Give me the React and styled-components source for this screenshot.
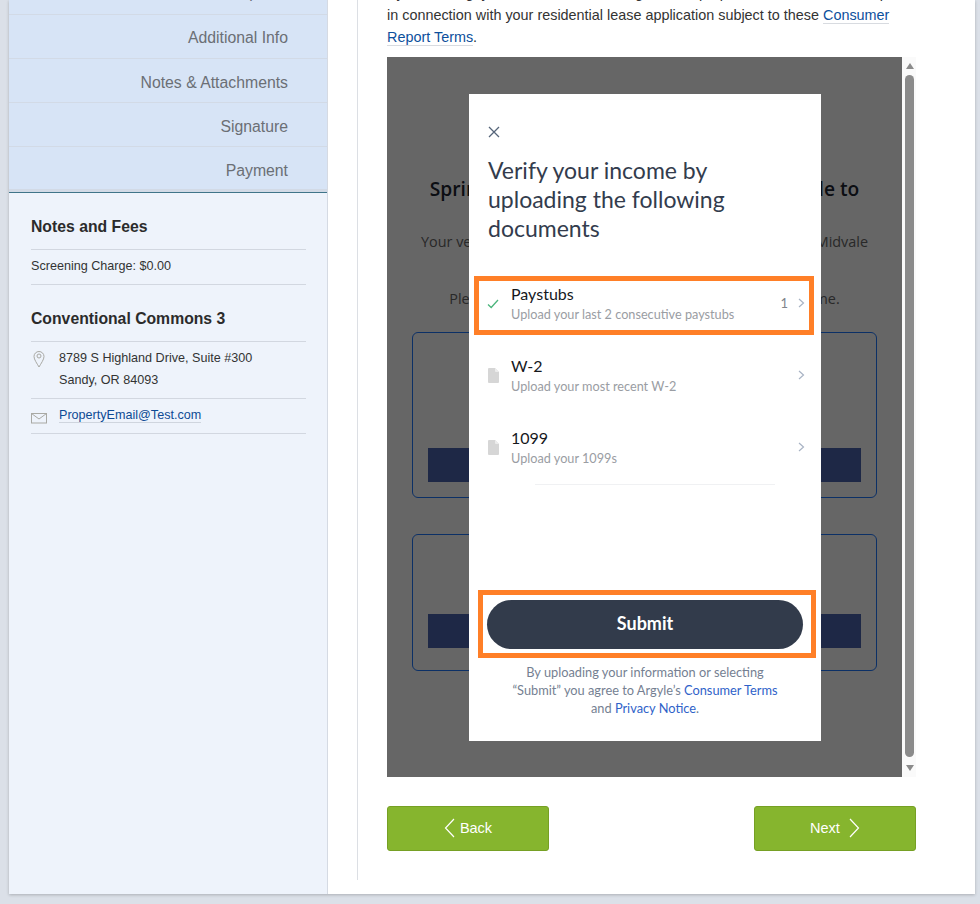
import React from 'react';
import styled, { createGlobalStyle } from 'styled-components';

const GlobalStyle = createGlobalStyle`
  html, body {
    margin: 0;
    padding: 0;
    height: 904px;
    overflow: hidden;
    background: #dbe0e8;
    font-family: "Liberation Sans", Arial, sans-serif;
  }
`;

const Viewport = styled.div`
  height: 904px;
  overflow: hidden;
  padding-right: 5px;
  padding-left: 9px;
  box-sizing: border-box;
`;

const Card = styled.div`
  display: flex;
  height: 894px;
  background: #fff;
  box-shadow: 0 1px 3px rgba(0, 0, 0, 0.22);
`;

const Sidebar = styled.aside`
  width: 318px;
  flex: none;
  background: #eef3fb;
  border-right: 1px solid #d5dae3;
`;

const Nav = styled.nav`
  background: #d7e4f6;
  border-bottom: 1px solid #3f7489;
  height: 193px;
  overflow: hidden;
  box-sizing: border-box;
`;

const NavItem = styled.div`
  height: 44px;
  box-sizing: border-box;
  border-bottom: 1px solid #d2dae6;
  padding: 0 39px 0 0;
  text-align: right;
  font-size: 15.8px;
  line-height: 48px;
  color: #6b6f75;
  &:first-child {
    height: 45px;
    margin-top: -30px;
    line-height: 45px;
  }
  &:nth-child(2) {
    line-height: 46px;
  }
  &:last-child {
    height: 45px;
    border-bottom: 3px solid #d2dae6;
  }
`;

const SideBody = styled.div`
  padding: 24px 21px 0 22px;
`;

const SideTitle = styled.h3`
  margin: 0;
  font-size: 15.75px;
  line-height: 20px;
  font-weight: bold;
  color: #2b2b2b;
  padding-bottom: 12px;
  border-bottom: 1px solid #d2d7e0;
`;

const SideRow = styled.div`
  display: flex;
  font-size: 12.6px;
  line-height: 22px;
  color: #333;
  padding: ${(p) => p.$pad || '5px 0 6px'};
  border-bottom: 1px solid #d2d7e0;
  margin-bottom: ${(p) => p.$gap || 0};
`;

const SideIcon = styled.span`
  width: 28px;
  flex: none;
  display: flex;
  color: #a9a9a4;
`;

const SideLink = styled.a`
  color: #0d4a94;
  border-bottom: 1px solid #cfd5de;
  line-height: 17px;
  height: 15px;
  margin-top: 4px;
`;

const Main = styled.main`
  flex: 1;
  padding-right: 59px;
  padding-left: 29px;
  height: 880px;
  border-left: 1px solid #dcdfe4;
  margin-left: 29px;
  position: relative;
  min-width: 0;
`;

const Intro = styled.p`
  margin: -18px 0 0;
  font-size: 14.4px;
  line-height: 22px;
  color: #333;
  white-space: nowrap;
  overflow: hidden;
`;

const TextLink = styled.a`
  color: #0d4f9c;
  border-bottom: 1px solid #d8dbe0;
`;

const FrameWrap = styled.div`
  display: flex;
  margin-top: 9px;
  height: 720px;
  width: 529px;
`;

const Frame = styled.div`
  position: relative;
  width: 515px;
  height: 720px;
  flex: none;
  overflow: hidden;
  background: #fff;
  font-family: "Open Sans", sans-serif;
  color: #222;
`;

const Behind = styled.div`
  padding: 119px 25px 0;
  text-align: center;
`;

const BehindTitle = styled.h2`
  margin: 0 -20px;
  font-size: 19.2px;
  line-height: 26px;
  font-weight: 600;
  white-space: nowrap;
  color: #1c2330;
`;

const BehindText = styled.p`
  margin: ${(p) => p.$margin};
  font-size: 14.4px;
  line-height: 20px;
  white-space: nowrap;
  color: #666;
`;

const OptionCard = styled.div`
  height: ${(p) => p.$h}px;
  box-sizing: border-box;
  border: 1px solid #1f78ff;
  border-radius: 6px;
  padding: ${(p) => p.$top}px 15px 0;
  margin-bottom: 36px;
`;

const OptionButton = styled.div`
  height: 34px;
  background: #4b64af;
`;

const Dim = styled.div`
  position: absolute;
  inset: 0;
  background: rgba(0, 0, 0, 0.6);
`;

const Modal = styled.div`
  position: absolute;
  left: 82px;
  top: 37px;
  width: 352px;
  height: 647px;
  background: #fff;
  font-family: Lato, sans-serif;
  display: flex;
  flex-direction: column;
`;

const CloseBtn = styled.div`
  height: 14px;
  margin: 31px 0 0 18px;
  color: #56657a;
  display: flex;
`;

const ModalTitle = styled.h1`
  margin: 17px 0 0 19px;
  font-size: 23px;
  line-height: 29px;
  font-weight: 400;
  color: #333c4d;
`;

const DocList = styled.div`
  margin-top: 35px;
`;

const DocRow = styled.div`
  position: relative;
  height: 72px;
  display: flex;
  box-sizing: border-box;
  padding: 6px 16px 0 19px;
`;

const DocIcon = styled.span`
  width: ${(p) => (p.$file ? 23 : 24)}px;
  flex: none;
  display: flex;
  padding-top: ${(p) => (p.$file ? 12 : 15)}px;
  margin-left: ${(p) => (p.$file ? 0 : -1)}px;
`;

const DocBody = styled.div`
  flex: 1;
`;

const DocName = styled.div`
  font-size: 16px;
  line-height: 20px;
  color: #16181d;
`;

const DocHint = styled.div`
  font-size: 12.7px;
  line-height: 18px;
  margin-top: 1px;
  color: #9a9da3;
`;

const DocCount = styled.span`
  font-size: 13px;
  color: #80848b;
  line-height: 20px;
  margin: 9px 10px 0 0;
`;

const DocArrow = styled.span`
  display: flex;
  padding-top: 14px;
  color: #a8b3c4;
`;

const Highlight = styled.div`
  position: absolute;
  box-sizing: border-box;
  border: 5px solid #ff7f27;
  left: ${(p) => p.$l}px;
  top: ${(p) => p.$t}px;
  width: ${(p) => p.$w}px;
  height: ${(p) => p.$h}px;
`;

const Rule = styled.div`
  height: 1px;
  margin: -10px 46px 0 66px;
  background: #f0f1f3;
`;

const SubmitButton = styled.button`
  display: block;
  margin: 115px 0 0 18px;
  width: 316px;
  height: 49px;
  border: 0;
  border-radius: 25px;
  padding: 0 0 3px;
  background: #323b4b;
  color: #fff;
  font-family: Lato, sans-serif;
  font-size: 18px;
  font-weight: 700;
`;

const Legal = styled.p`
  margin: 14px 0 0;
  font-size: 12.8px;
  line-height: 18.2px;
  text-align: center;
  color: #757f92;
`;

const LegalLink = styled.a`
  color: #2f62c9;
`;

const Scrollbar = styled.div`
  width: 14px;
  box-sizing: border-box;
  padding-left: 1px;
  background: #fafafa;
  display: flex;
  flex-direction: column;
  align-items: center;
`;

const ScrollArrow = styled.div`
  width: 0;
  height: 0;
  border-left: 4.5px solid transparent;
  border-right: 4.5px solid transparent;
  ${(p) => (p.$down ? 'border-top: 6px solid #8b8b8b;' : 'border-bottom: 6px solid #8b8b8b;')}
  margin: ${(p) => (p.$down ? '8px 0 6px' : '6px 0 6px')};
`;

const ScrollThumb = styled.div`
  flex: 1;
  width: 9px;
  background: #8b8b8b;
  border-radius: 4.5px;
`;

const Actions = styled.div`
  display: flex;
  justify-content: space-between;
  width: 529px;
  margin-top: 29px;
`;

const NavButton = styled.button`
  display: flex;
  align-items: center;
  justify-content: center;
  gap: ${(p) => p.$gap}px;
  width: 162px;
  height: 45px;
  background: #86b52e;
  border: 1px solid #76a024;
  border-radius: 3px;
  color: #fff;
  font-family: "Liberation Sans", Arial, sans-serif;
  font-size: 14.5px;
  padding: 0 0 2px;
`;

const PinIcon = () => (
  <svg width="16" height="18" viewBox="0 0 16 18" fill="none" stroke="currentColor" strokeWidth="1" style={{ marginTop: 3 }}>
    <path d="M3 6.500a5 5 0 0 1 10 0c0 3-3 7-5 10.500c-2-3.500-5-7.500-5-10.500z" />
    <circle cx="8" cy="6" r="2" />
  </svg>
);

const MailIcon = () => (
  <svg width="16" height="12" viewBox="0 0 16 12" fill="none" stroke="currentColor" strokeWidth="1" style={{ marginTop: 9 }}>
    <rect x="0.500" y="1.500" width="15" height="9.500" />
    <path d="M0.500 1.500L8 7l7.500-5.500" />
  </svg>
);

const Close = () => (
  <svg width="14" height="14" viewBox="0 0 14 14" fill="none" stroke="currentColor" strokeWidth="1.300">
    <path d="M2 2l10 10M12 2L2 12" />
  </svg>
);

const Check = () => (
  <svg width="12" height="10" viewBox="0 0 12 10" fill="none" stroke="#4cb57c" strokeWidth="1.300">
    <path d="M1 5.500l3.200 3L11 1" />
  </svg>
);

const FileIcon = () => (
  <svg width="11" height="15" viewBox="0 0 11 15">
    <path fill="#d6d6d6" d="M1 0h6l4 4v10a1 1 0 0 1-1 1H1a1 1 0 0 1-1-1V1a1 1 0 0 1 1-1z" />
    <path fill="#ececec" d="M7 0v3a1 1 0 0 0 1 1h3z" />
  </svg>
);

const Chevron = () => (
  <svg width="7" height="10" viewBox="0 0 7 10" fill="none" stroke="currentColor" strokeWidth="1.200">
    <path d="M1 1l4.500 4L1 9" />
  </svg>
);

const BackArrow = () => (
  <svg width="11" height="20" viewBox="0 0 11 20" fill="none" stroke="#fff" strokeWidth="1.200">
    <path d="M10 1L1.500 10l8.500 9" />
  </svg>
);

const NextArrow = () => (
  <svg width="11" height="20" viewBox="0 0 11 20" fill="none" stroke="#fff" strokeWidth="1.200">
    <path d="M1 1l8.500 9L1 19" />
  </svg>
);

const docs = [
  { name: 'Paystubs', hint: 'Upload your last 2 consecutive paystubs', done: true, count: 1 },
  { name: 'W-2', hint: 'Upload your most recent W-2' },
  { name: '1099', hint: 'Upload your 1099s' },
];

export default function App() {
  return (
    <>
      <GlobalStyle />
      <Viewport>
        <Card>
          <Sidebar>
            <Nav>
              <NavItem>Occupants</NavItem>
              <NavItem>Additional Info</NavItem>
              <NavItem>Notes &amp; Attachments</NavItem>
              <NavItem>Signature</NavItem>
              <NavItem>Payment</NavItem>
            </Nav>
            <SideBody>
              <SideTitle>Notes and Fees</SideTitle>
              <SideRow $pad="5px 0 7px" $gap="24px">Screening Charge: $0.00</SideRow>
              <SideTitle>Conventional Commons 3</SideTitle>
              <SideRow $pad="5px 0 7px">
                <SideIcon><PinIcon /></SideIcon>
                <div>8789 S Highland Drive, Suite #300<br />Sandy, OR 84093</div>
              </SideRow>
              <SideRow $pad="4px 0 9px">
                <SideIcon><MailIcon /></SideIcon>
                <SideLink>PropertyEmail@Test.com</SideLink>
              </SideRow>
            </SideBody>
          </Sidebar>
          <Main>
            <Intro>
              By continuing, you authorize the sharing and the proper use of data for this report<br />
              in connection with your residential lease application subject to these <TextLink>Consumer</TextLink><br />
              <TextLink>Report Terms</TextLink>.
            </Intro>
            <FrameWrap>
              <Frame>
                <Behind>
                  <BehindTitle>Springs at Midvale would like you to be able to</BehindTitle>
                  <BehindText $margin="30px 0 0">Your verification is needed to complete your application at Midvale</BehindText>
                  <BehindText $margin="37px 0 23px">Please select one of the two options to verify your income.</BehindText>
                  <OptionCard $h={166} $top={115}><OptionButton /></OptionCard>
                  <OptionCard $h={137} $top={79}><OptionButton /></OptionCard>
                </Behind>
                <Dim />
                <Modal>
                  <CloseBtn><Close /></CloseBtn>
                  <ModalTitle>Verify your income by<br />uploading the following<br />documents</ModalTitle>
                  <DocList>
                    {docs.map((doc) => (
                      <DocRow key={doc.name}>
                        <DocIcon $file={!doc.done}>{doc.done ? <Check /> : <FileIcon />}</DocIcon>
                        <DocBody>
                          <DocName>{doc.name}</DocName>
                          <DocHint>{doc.hint}</DocHint>
                        </DocBody>
                        {doc.count && <DocCount>{doc.count}</DocCount>}
                        <DocArrow><Chevron /></DocArrow>
                      </DocRow>
                    ))}
                  </DocList>
                  <Rule />
                  <SubmitButton>Submit</SubmitButton>
                  <Legal>
                    By uploading your information or selecting<br />
                    “Submit” you agree to Argyle’s <LegalLink>Consumer Terms</LegalLink><br />
                    and <LegalLink>Privacy Notice</LegalLink>.
                  </Legal>
                  <Highlight $l={5} $t={182} $w={340} $h={59} />
                  <Highlight $l={9} $t={496} $w={338} $h={68} />
                </Modal>
              </Frame>
              <Scrollbar>
                <ScrollArrow />
                <ScrollThumb />
                <ScrollArrow $down />
              </Scrollbar>
            </FrameWrap>
            <Actions>
              <NavButton $gap={5}><BackArrow /> Back</NavButton>
              <NavButton $gap={9}>Next <NextArrow /></NavButton>
            </Actions>
          </Main>
        </Card>
      </Viewport>
    </>
  );
}
